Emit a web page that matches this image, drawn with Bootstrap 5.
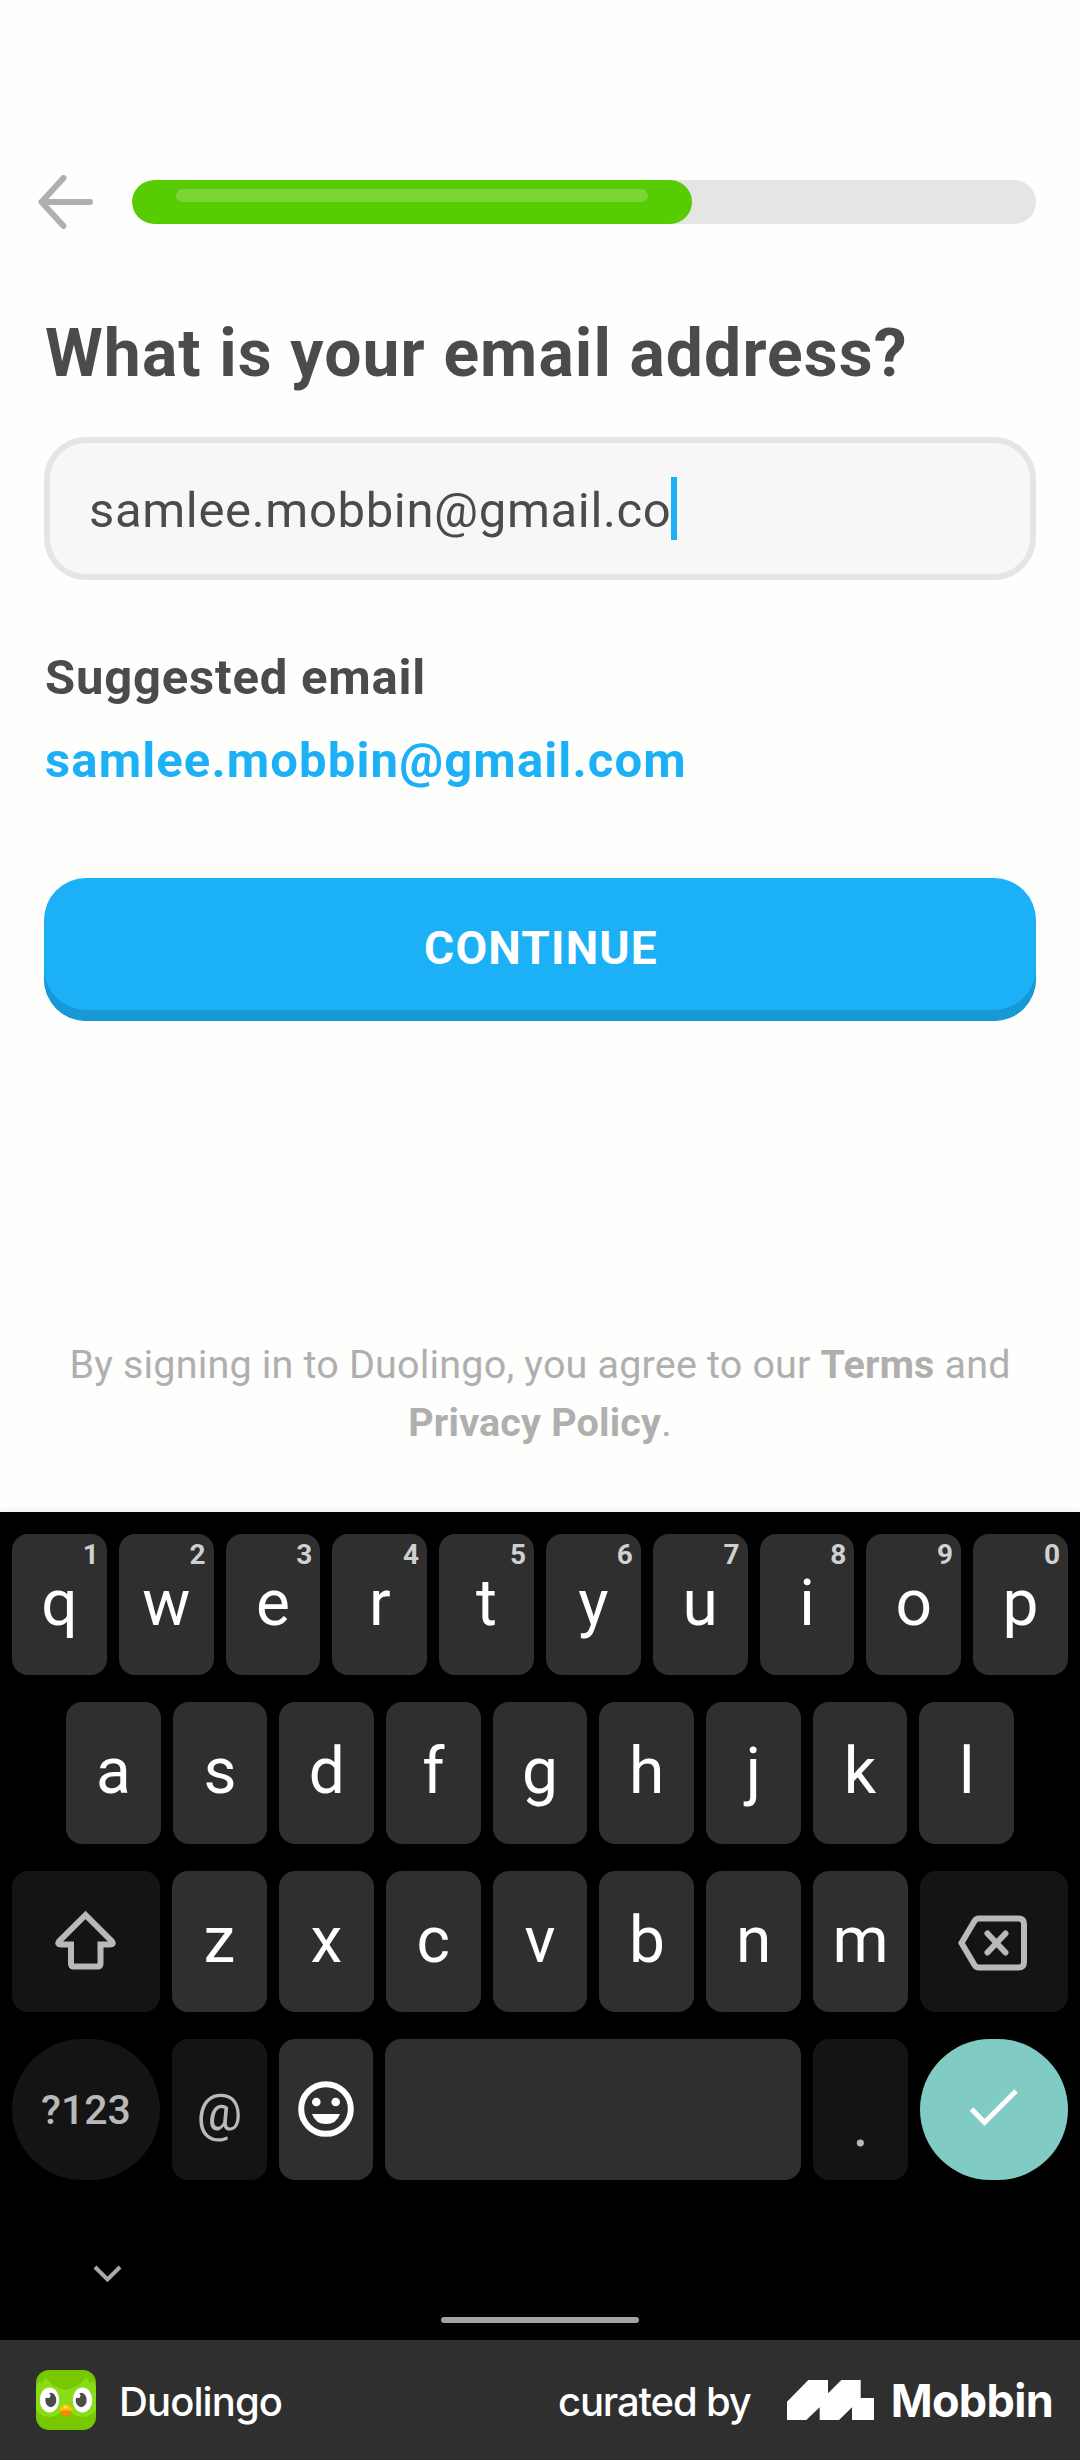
<!DOCTYPE html>
<html lang="en">
<head>
<meta charset="utf-8">
<title>Duolingo – email</title>
<link rel="stylesheet" href="https://cdn.jsdelivr.net/npm/bootstrap@5.3.0/dist/css/bootstrap.min.css">
<style>
body{width:1080px;height:2460px;background:#fefefd;font-family:Roboto,"Liberation Sans",sans-serif;overflow:hidden}
.signup{height:1512px;padding:175px 44px 0;color:#4b4b4b}
.back-arrow{margin:0 38px 0 -6px;flex:none;display:block}
.lesson-bar{height:44px;border-radius:22px;background:#e5e5e5}
.lesson-bar .progress-bar{border-radius:22px;background:#58cc02;padding:9px 44px 22px}
.shine{height:13px;border-radius:7px;background:#79d634}
.title{font-size:66px;line-height:78px;font-weight:700;letter-spacing:1.1px;margin:86px 0 0 1px}
.email-box{height:143px;margin-top:44px;border:6px solid #e5e5e5;border-radius:42px;background:#f7f7f7;padding-left:39px;font-size:49px;letter-spacing:.65px}
.email-box span{padding-top:5px}
.caret{width:6px;height:63px;background:#1cb0f6}
.suggest{font-size:49px;line-height:60px;font-weight:700;letter-spacing:.8px;margin:68px 0 0 1px}
.suggest-link{font-size:49px;line-height:60px;font-weight:700;letter-spacing:1.12px;color:#1cb0f6;margin:23px 0 0 1px}
.btn-go{height:143px;margin-top:87px;border:0;border-radius:42px;background:#1cb0f6;box-shadow:inset 0 -11px 0 #1899d6;color:#fff;font-size:46px;font-weight:700;letter-spacing:1.2px;padding:0 0 2px 2px}
.btn-go:hover{background:#1cb0f6;color:#fff}
.legal{font-size:39.5px;line-height:57.5px;letter-spacing:.18px;color:#afafaf;margin-top:315px}
.keyboard{height:828px;background:#000;padding:22px 12px 0;box-shadow:0 -1px 6px rgba(0,0,0,.08)}
.key-row{gap:12px;height:141.3px;margin-bottom:27px}
.key-row.inset{padding:0 54px}
.kb-key{flex:1 1 0;min-width:0;border-radius:16px;background:#2f2f2f;color:#fff;font-size:64px;line-height:1;position:relative;display:flex;align-items:center;justify-content:center;padding-bottom:1px}
.kb-key sup{position:absolute;top:7px;right:8px;font-size:28px;line-height:28px;font-weight:700;color:#d0d0d0}
.kb-key.fn{background:#141414;color:#b9b9b9}
.kb-key.wide{flex:0 0 148px}
.kb-key.space{flex:0 0 416px}
.kb-key.round{border-radius:71px}
.kb-key.ok{background:#80cbc4}
.kb-key.modes{font-size:41px;font-weight:500;padding-top:2px}
.kb-key.at{font-size:51px;padding-top:6px}
.kb-key.dot{font-size:64px;padding-top:32px}
.handle{width:198px;height:6px;border-radius:3px;background:#a3a3a3;margin:34px auto 0}
.fold{display:block;margin:85px 0 0 80px}
.credit{height:120px;background:#2f2f2f;color:#fff;font-family:Inter,"Liberation Sans",sans-serif;font-size:40px;font-weight:500;padding:0 27px 0 36px}
.credit span{padding-top:3px}
.app-name{margin-left:23px;letter-spacing:-.9px}
.by-line{letter-spacing:-1.15px;margin-right:36px}
.brand{font-size:45px;font-weight:700;letter-spacing:-.7px;margin-left:17px}
.credit .brand{padding-top:1px}
</style>
<script src="https://cdn.jsdelivr.net/npm/bootstrap@5.3.0/dist/js/bootstrap.bundle.min.js"></script>
</head>
<body>
<main class="signup d-flex flex-column text-nowrap">
  <div class="d-flex align-items-center">
    <svg class="back-arrow" width="56" height="54" viewBox="0 0 56 54" fill="none" stroke="#afafaf" stroke-width="6" stroke-linecap="round" stroke-linejoin="round"><path d="M25.500 3 3.500 27 25.500 51M3.500 27H52"/></svg>
    <div class="progress lesson-bar flex-grow-1"><div class="progress-bar" style="width:62%"><div class="shine"></div></div></div>
  </div>
  <h1 class="title mb-0">What is your email address?</h1>
  <div class="email-box d-flex align-items-center"><span>samlee.mobbin@gmail.co</span><i class="caret"></i></div>
  <div class="suggest">Suggested email</div>
  <div class="suggest-link">samlee.mobbin@gmail.com</div>
  <button class="btn btn-go w-100">CONTINUE</button>
  <p class="legal text-center mb-0">By signing in to Duolingo, you agree to our <b>Terms</b> and<br><b>Privacy Policy</b>.</p>
</main>
<section class="keyboard">
  <div class="key-row d-flex">
    <div class="kb-key">q<sup>1</sup></div><div class="kb-key">w<sup>2</sup></div><div class="kb-key">e<sup>3</sup></div><div class="kb-key">r<sup>4</sup></div><div class="kb-key">t<sup>5</sup></div><div class="kb-key">y<sup>6</sup></div><div class="kb-key">u<sup>7</sup></div><div class="kb-key">i<sup>8</sup></div><div class="kb-key">o<sup>9</sup></div><div class="kb-key">p<sup>0</sup></div>
  </div>
  <div class="key-row inset d-flex">
    <div class="kb-key">a</div><div class="kb-key">s</div><div class="kb-key">d</div><div class="kb-key">f</div><div class="kb-key">g</div><div class="kb-key">h</div><div class="kb-key">j</div><div class="kb-key">k</div><div class="kb-key">l</div>
  </div>
  <div class="key-row d-flex">
    <div class="kb-key fn wide"><svg width="64" height="64" viewBox="0 0 64 64" fill="none" stroke="#b9b9b9" stroke-width="6"><path d="M31.500 6 5 32.500Q3 35.500 6.500 35.500H17V54.500Q17 57.500 20 57.500H43.500Q46.500 57.500 46.500 54.500V35.500H56.500Q60 35.500 58 32.500Z"/></svg></div>
    <div class="kb-key">z</div><div class="kb-key">x</div><div class="kb-key">c</div><div class="kb-key">v</div><div class="kb-key">b</div><div class="kb-key">n</div><div class="kb-key">m</div>
    <div class="kb-key fn wide"><svg class="mt-1" width="72" height="56" viewBox="0 0 72 56" fill="none" stroke="#b9b9b9" stroke-width="6" stroke-linecap="round"><path d="M3.500 28 16.500 6Q18 3.500 21 3.500H60.500Q66 3.500 66 9V47Q66 52.500 60.500 52.500H21Q18 52.500 16.500 50ZM29.500 18.500 47.500 37.500M47.500 18.500 29.500 37.500"/></svg></div>
  </div>
  <div class="key-row d-flex mb-0">
    <div class="kb-key fn wide round modes">?123</div>
    <div class="kb-key fn at">@</div>
    <div class="kb-key"><svg width="56" height="56" viewBox="0 0 56 56"><circle cx="28" cy="28" r="24.800" fill="none" stroke="#fff" stroke-width="6"/><circle cx="18.300" cy="21" r="4.300" fill="#fff"/><circle cx="37.700" cy="21" r="4.300" fill="#fff"/><path d="M14 33H42Q38.500 43 28 43T14 33Z" fill="#fff"/></svg></div>
    <div class="kb-key space"></div>
    <div class="kb-key fn dot">.</div>
    <div class="kb-key wide round ok"><svg width="50" height="40" viewBox="0 0 50 40" fill="none" stroke="#fff" stroke-width="5"><path d="M2.500 20 15.500 33.500 47 2"/></svg></div>
  </div>
  <svg class="fold" width="30" height="18" viewBox="0 0 30 18" fill="none" stroke="#a9a9a9" stroke-width="4"><path d="M3 2 15.500 14.500 28 2"/></svg>
  <div class="handle"></div>
</section>
<footer class="credit d-flex align-items-center text-nowrap">
  <svg width="60" height="60" viewBox="0 0 60 60">
    <clipPath id="tile"><rect width="60" height="60" rx="13"/></clipPath>
    <g clip-path="url(#tile)">
      <path fill="#78c800" d="M0 0H60V60H0Z"/>
      <path fill="#89dc18" d="M0 17 3 11 6 14 9 7Q17 18 30 20Q43 18 50 7L54 14 57 11 60 17V40Q55 47 46 47Q37 46 34 41H26Q23 46 14 47Q5 47 0 40Z"/>
      <ellipse cx="13.500" cy="30" rx="9.800" ry="12.500" fill="#fff"/><ellipse cx="46.500" cy="30" rx="9.800" ry="12.500" fill="#fff"/>
      <ellipse cx="14.800" cy="30" rx="5.500" ry="7.200" fill="#4b4b4b"/><ellipse cx="45.200" cy="30" rx="5.500" ry="7.200" fill="#4b4b4b"/>
      <circle cx="11.800" cy="25.500" r="2.600" fill="#fff"/><circle cx="41.800" cy="25.500" r="2.600" fill="#fff"/>
      <path fill="#ffc200" d="M23 40Q26 34.500 30 34.500T37 40L34 42H26Z"/><path fill="#f58a07" d="M24 41Q30 39.500 35.500 41Q34 46.500 30 46.500T24 41Z"/>
      <ellipse cx="29.800" cy="37" rx="2.200" ry="1.500" fill="#ffe25a"/>
    </g>
  </svg>
  <span class="app-name">Duolingo</span>
  <span class="by-line ms-auto">curated by</span>
  <svg width="87" height="40" viewBox="0 0 87 40" fill="#fff"><path d="M0 21.700 21.300 0H41V13.300L54.400 0H73.700V18H87V40H65V27.300L52 40H32.700V27.300L19.300 40H0Z"/></svg>
  <span class="brand">Mobbin</span>
</footer>
</body>
</html>
